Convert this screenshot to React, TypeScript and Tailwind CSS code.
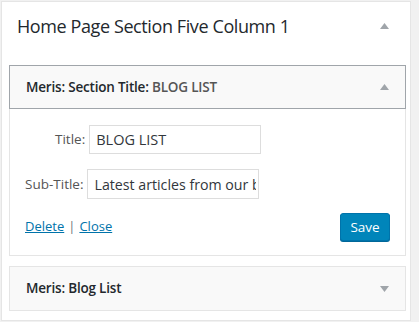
import React from 'react';

function Arrow({ up }: { up?: boolean }) {
  return (
    <svg width="9" height="6" viewBox="0 0 9 6" className="shrink-0">
      <path d={up ? 'M0 6 L4.5 0 L9 6 Z' : 'M0 0 L4.5 6 L9 0 Z'} fill="#a0a5aa" />
    </svg>
  );
}

export default function App() {
  return (
    <div className="w-[419px] h-[322px] bg-[#f1f1f1] pt-px pl-px font-['Open_Sans',sans-serif] text-[#23282d]">
      <div className="w-[410px] h-[320px] bg-white border border-[#e5e5e5] pl-[7px] pr-[4px]">
        <div className="h-[63px] flex items-start justify-between pt-[12px] pl-[8px] pr-[17px]">
          <h2 className="text-[18px] leading-[24px] tracking-[-0.4px]">Home Page Section Five Column 1</h2>
          <div className="pt-[9px]"><Arrow up /></div>
        </div>

        <div>
          <div className="h-[44px] border border-[#a0a5aa] bg-[#f9f9f9] flex items-center justify-between pl-[16px] pr-[16px]">
            <span className="text-[13.5px] font-semibold tracking-[-0.2px]">
              Meris: Section Title: <span className="text-[#555]">BLOG LIST</span>
            </span>
            <Arrow up />
          </div>
          <div className="border border-t-0 border-[#e5e5e5] px-[15px] pt-[16px] pb-[14px] text-[13.5px] text-[#555]">
            <div className="flex items-center pl-[30px]">
              <label className="mr-[4px]">Title:</label>
              <input
                readOnly
                value="BLOG LIST"
                className="w-[172px] h-[29px] border border-[#ddd] px-[6px] text-[14.5px] text-[#32373c] outline-none"
              />
            </div>
            <div className="flex items-center mt-[15px]">
              <label className="mr-[4px]">Sub-Title:</label>
              <input
                readOnly
                value="Latest articles from our blog"
                className="w-[172px] h-[30px] border border-[#ddd] pl-[6px] pr-[2px] text-[14.2px] text-[#32373c] outline-none"
              />
            </div>
            <div className="flex items-end justify-between mt-[14px]">
              <div className="pb-[6px] leading-[18px] text-[13px]">
                <a className="text-[#0073aa] underline">Delete</a>
                <span className="text-[#72777c] mx-[4px]">|</span>
                <a className="text-[#0073aa] underline">Close</a>
              </div>
              <button className="w-[50px] h-[28px] rounded-[3px] bg-[#0085ba] border border-[#0073aa] shadow-[0_1px_0_#006799] text-white text-[13.5px] leading-[26px]">
                Save
              </button>
            </div>
          </div>
        </div>

        <div className="mt-[10px] h-[45px] border border-[#e5e5e5] bg-[#f9f9f9] flex items-center justify-between pl-[16px] pr-[16px]">
          <span className="text-[13.5px] font-semibold tracking-[-0.2px]">Meris: Blog List</span>
          <Arrow />
        </div>
      </div>
    </div>
  );
}
